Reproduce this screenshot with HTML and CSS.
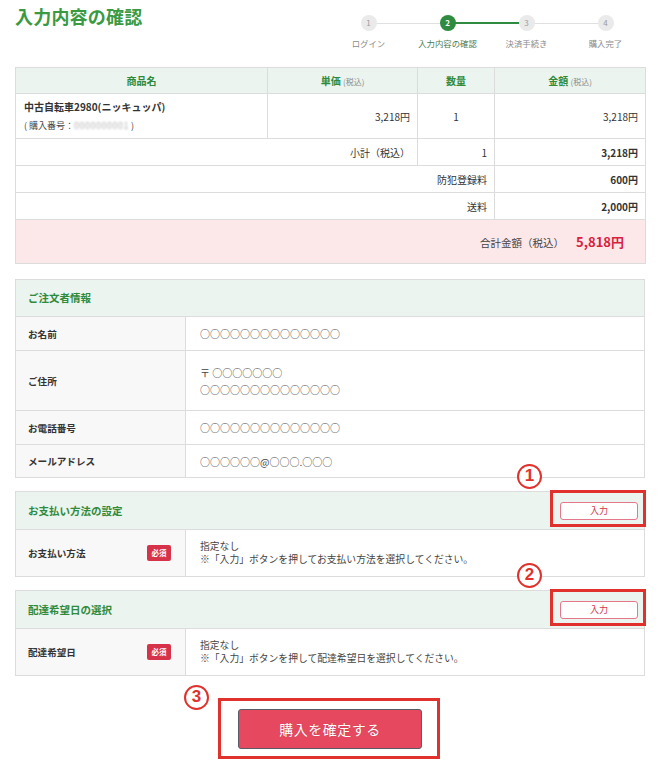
FILE: index.html
```html
<!DOCTYPE html>
<html lang="ja">
<head>
<meta charset="utf-8">
<title>入力内容の確認</title>
<link rel="stylesheet" href="styles.css">
</head>
<body>
<div class="page">
  <header class="top">
    <h1 class="title">入力内容の確認</h1>
    <ol class="stepper">
      <li class="step"><span class="num">1</span><span class="step-label">ログイン</span></li>
      <li class="step active"><span class="num">2</span><span class="step-label">入力内容の確認</span></li>
      <li class="step done-line"><span class="num">3</span><span class="step-label">決済手続き</span></li>
      <li class="step"><span class="num">4</span><span class="step-label">購入完了</span></li>
    </ol>
  </header>

  <table class="items">
    <colgroup>
      <col class="c1"><col class="c2"><col class="c3"><col class="c4">
    </colgroup>
    <thead>
      <tr>
        <th>商品名</th>
        <th>単価 <small>(税込)</small></th>
        <th>数量</th>
        <th>金額 <small>(税込)</small></th>
      </tr>
    </thead>
    <tbody>
      <tr class="product">
        <td class="name">
          <div class="pname">中古自転車2980(ニッキュッパ)</div>
          <div class="pno">( 購入番号：<span class="blur">0000000001</span> )</div>
        </td>
        <td class="r">3,218円</td>
        <td class="c">1</td>
        <td class="r">3,218円</td>
      </tr>
      <tr class="sum">
        <td colspan="2" class="r">小計（税込）</td>
        <td class="r">1</td>
        <td class="r b">3,218円</td>
      </tr>
      <tr class="sum">
        <td colspan="3" class="r">防犯登録料</td>
        <td class="r b">600円</td>
      </tr>
      <tr class="sum">
        <td colspan="3" class="r">送料</td>
        <td class="r b">2,000円</td>
      </tr>
      <tr class="total">
        <td colspan="4"><span class="total-label">合計金額（税込）</span><span class="total-value">5,818円</span></td>
      </tr>
    </tbody>
  </table>

  <section class="panel first">
    <div class="panel-head"><h2 class="panel-title">ご注文者情報</h2></div>
    <div class="row h33"><div class="lbl">お名前</div><div class="val">○○○○○○○○○○○○○○</div></div>
    <div class="row h59"><div class="lbl">ご住所</div><div class="val">〒 ○○○○○○○<br>○○○○○○○○○○○○○○</div></div>
    <div class="row h33"><div class="lbl">お電話番号</div><div class="val">○○○○○○○○○○○○○○</div></div>
    <div class="row h32"><div class="lbl">メールアドレス</div><div class="val">○○○○○○@○○○.○○○</div></div>
  </section>

  <section class="panel">
    <div class="panel-head">
      <h2 class="panel-title">お支払い方法の設定</h2>
      <button class="input-btn" type="button">入力</button>
      <span class="mark-box"></span>
      <span class="mark-num">1</span>
    </div>
    <div class="row h46"><div class="lbl">お支払い方法<span class="req">必須</span></div><div class="val note">指定なし<br>※「入力」ボタンを押してお支払い方法を選択してください。</div></div>
  </section>

  <section class="panel">
    <div class="panel-head">
      <h2 class="panel-title">配達希望日の選択</h2>
      <button class="input-btn" type="button">入力</button>
      <span class="mark-box"></span>
      <span class="mark-num">2</span>
    </div>
    <div class="row h46"><div class="lbl">配達希望日<span class="req">必須</span></div><div class="val note">指定なし<br>※「入力」ボタンを押して配達希望日を選択してください。</div></div>
  </section>

  <div class="confirm">
    <button class="buy-btn" type="button">購入を確定する</button>
    <span class="buy-box"></span>
    <span class="mark-num buy-num">3</span>
  </div>
</div>
</body>
</html>
```

FILE: styles.css
```css
* { box-sizing: border-box; }
html, body { margin: 0; padding: 0; background: #fff; }
body {
  font-family: "Noto Sans CJK JP", "Noto Sans", sans-serif;
  color: #333;
  font-size: 10px;
}
.page { padding: 0 15px; width: 660px; }

/* header */
.top { display: flex; justify-content: space-between; align-items: flex-start; height: 67px; }
.title { margin: 0; padding-top: 5px; font-size: 18px; line-height: 22px; font-weight: bold; color: #3a9a42; letter-spacing: 0.2px; }
.stepper { display: flex; width: 316px; margin: 0; padding: 15px 0 0; list-style: none; }
.step { flex: 1; position: relative; display: flex; flex-direction: column; align-items: center; }
.step + .step::before {
  content: ""; position: absolute; top: 8px; right: 50%; width: 100%; height: 1px; background: #e0e0e0;
}
.step.done-line::before { background: #2f8b3f; height: 2px; top: 7px; }
.num {
  position: relative; z-index: 1;
  width: 16px; height: 16px; border-radius: 50%;
  background: #eaeaea; color: #9a9a9a;
  font-size: 8px; line-height: 16px; text-align: center;
}
.step.active .num { background: #2f8b3f; color: #fff; font-weight: bold; }
.step-label { margin-top: 6px; font-size: 8.4px; line-height: 12px; color: #8a8a8a; white-space: nowrap; }
.step.active .step-label { color: #4c7a52; }

/* items table */
.items { width: 630px; border-collapse: collapse; table-layout: fixed; font-size: 10px; color: #333; }
.items .c1 { width: 252px; }
.items .c2 { width: 150px; }
.items .c3 { width: 77px; }
.items .c4 { width: 151px; }
.items th, .items td { border: 1px solid #dcdcdc; padding: 0 7px; }
.items th {
  height: 26px; background: #ebf4ee; color: #2f8a3c; font-weight: bold; font-size: 10px; text-align: center;
}
.items th small { font-size: 8px; color: #8a8a8a; font-weight: normal; }
.items .product td { height: 45px; }
.items .name { padding-left: 8px; }
.pname { font-weight: bold; font-size: 10px; line-height: 14px; }
.pno { font-size: 9px; line-height: 14px; margin-top: 5px; color: #444; }
.blur { color: #b5b5b5; filter: blur(1.2px); letter-spacing: 0.5px; }
.items .sum td { height: 27px; }
.items .r { text-align: right; }
.items .c { text-align: center; }
.items .b { font-weight: bold; }
.items .total td { height: 44px; background: #fce8e9; text-align: right; padding-right: 21px; }
.total-label { font-size: 10.5px; color: #444; }
.total-value { font-size: 13px; font-weight: bold; color: #d9213d; margin-left: 12px; }

/* panels */
.panel { border: 1px solid #dcdcdc; margin-top: 13px; }
.panel.first { margin-top: 15px; }
.panel-head {
  position: relative;
  display: flex; align-items: center; justify-content: space-between;
  height: 37px; padding: 0 6px 0 12px; background: #ebf4ee;
}
.panel.first .panel-head { height: 36px; }
.panel-title { margin: 0; font-size: 10.5px; font-weight: bold; color: #2f8a3c; line-height: 14px; }
.row { display: grid; grid-template-columns: 170px 1fr; border-top: 1px solid #dcdcdc; }
.row.h33 { height: 34px; }
.row.h32 { height: 33px; }
.row.h59 { height: 60px; }
.row.h46 { height: 47px; }
.lbl {
  display: flex; align-items: center; justify-content: space-between;
  padding: 0 14px 0 12px; background: #f8f8f8; border-right: 1px solid #dcdcdc;
  font-weight: bold; font-size: 9.6px; color: #333;
}
.val { display: flex; flex-direction: column; justify-content: center; padding-left: 14px; font-size: 10px; line-height: 17px; color: #444; }
.val.note { line-height: 13px; font-size: 9.8px; }
.req {
  display: inline-block; width: 24px; height: 16px; border-radius: 2px;
  background: #d6334b; color: #fff; font-size: 7.5px; font-weight: bold; line-height: 16px; text-align: center;
}
.input-btn {
  width: 78px; height: 18px; padding: 0; margin: 0;
  background: #fff; border: 1px solid #e4788a; border-radius: 3px;
  color: #d6334b; font-family: inherit; font-size: 9px; line-height: 16px;
}

/* annotations */
.mark-box {
  position: absolute; right: -2px; top: -2px; width: 96px; height: 37px;
  border: 3px solid #e0312c;
}
.mark-num {
  position: absolute; right: 102px; top: -28px;
  width: 25px; height: 25px; border: 2.8px solid #e0312c; border-radius: 50%;
  color: #e0312c; font-size: 17px; font-weight: bold; line-height: 19px; text-align: center;
  font-family: "Liberation Sans", "Noto Sans", sans-serif;
  background: #fff;
}

/* confirm */
.confirm { position: relative; display: flex; justify-content: center; padding: 33px 0 15px; }
.buy-btn {
  width: 184px; height: 40px; margin: 0; padding: 0;
  background: #e6495f; border: 1.5px solid #5c5c66; border-radius: 3px;
  color: #fff; font-family: inherit; font-size: 14px; letter-spacing: 0.5px;
  text-shadow: 0 0 1px rgba(0,0,0,0.25);
}
.buy-box {
  position: absolute; left: 203px; top: 22px; width: 222px; height: 61px;
  border: 3px solid #e0312c;
}
.buy-num { left: 169px; right: auto; top: 9px; }
```
